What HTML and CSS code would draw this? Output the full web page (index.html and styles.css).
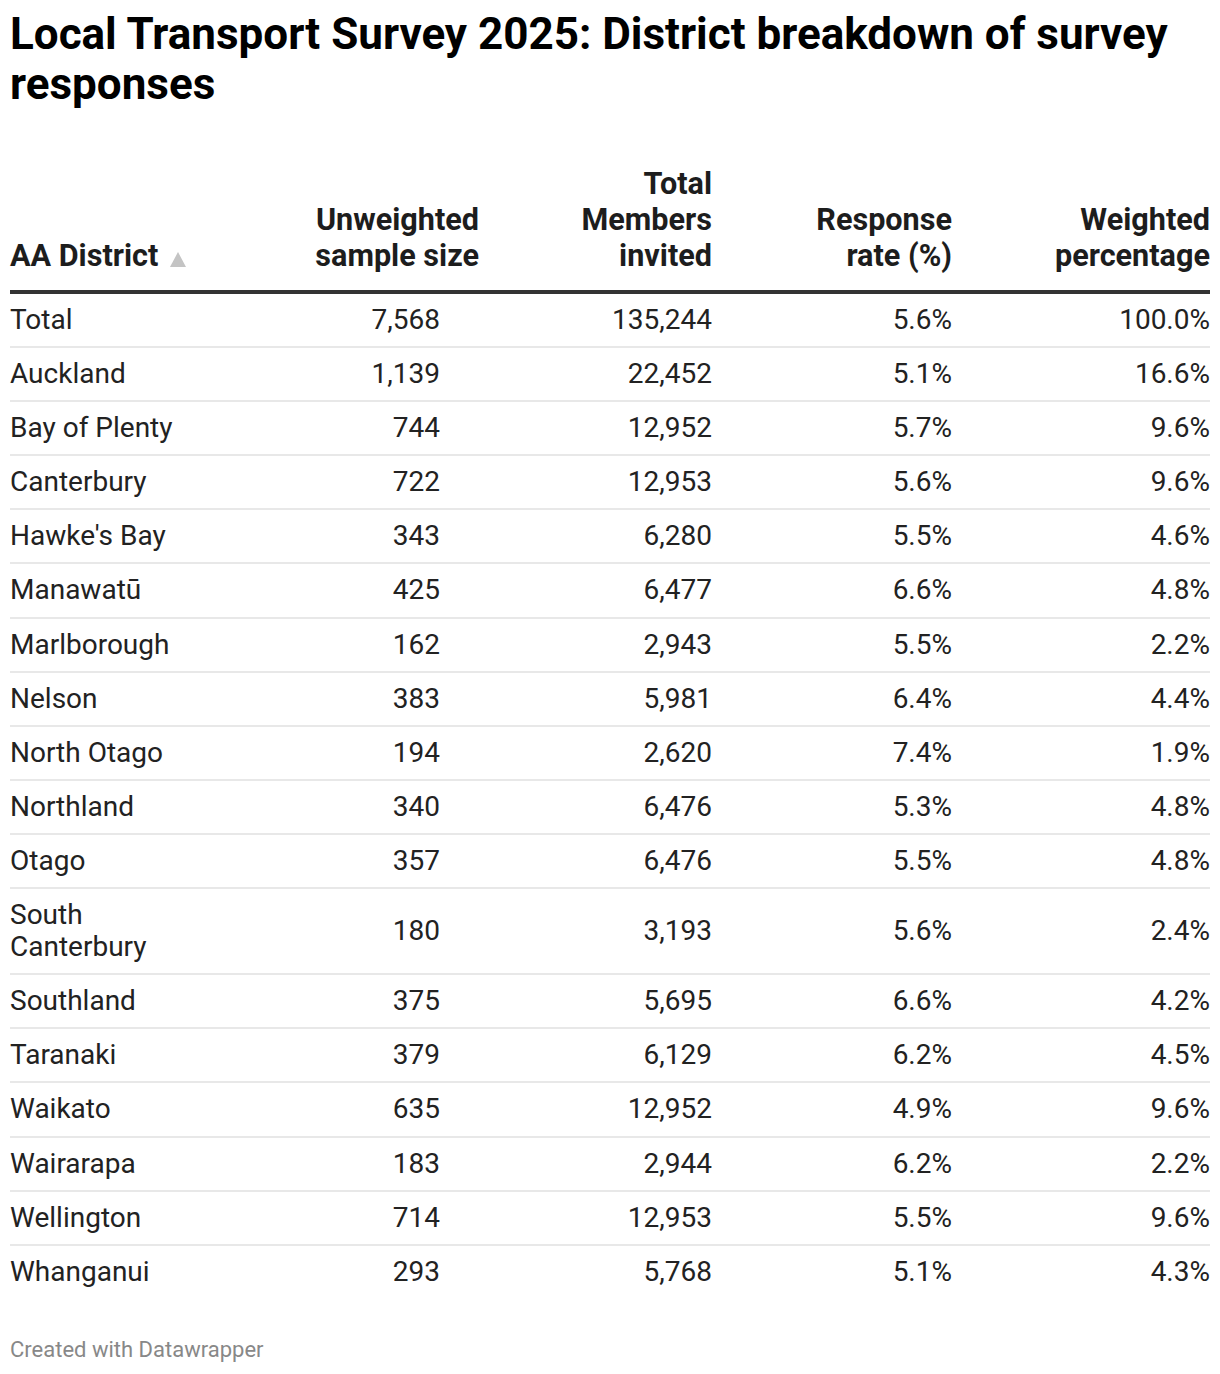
FILE: index.html
```html
<!DOCTYPE html>
<html lang="en">
<head>
<meta charset="utf-8">
<title>Local Transport Survey 2025</title>
<link rel="stylesheet" href="styles.css">
</head>
<body>
<div class="chart">
  <h1 class="title">Local Transport Survey 2025: District breakdown of survey responses</h1>
  <table class="data">
    <colgroup>
      <col class="c1"><col class="c2"><col class="c3"><col class="c4"><col class="c5">
    </colgroup>
    <thead>
      <tr>
        <th class="left">AA District <svg class="sort" width="16" height="15" viewBox="0 0 16 15"><polygon points="8,0 16,15 0,15" fill="#c4c4c4"/></svg></th>
        <th>Unweighted sample size</th>
        <th>Total Members invited</th>
        <th>Response rate (%)</th>
        <th>Weighted percentage</th>
      </tr>
    </thead>
    <tbody>
      <tr><td class="left">Total</td><td class="n2">7,568</td><td>135,244</td><td>5.6%</td><td>100.0%</td></tr>
      <tr><td class="left">Auckland</td><td class="n2">1,139</td><td>22,452</td><td>5.1%</td><td>16.6%</td></tr>
      <tr><td class="left">Bay of Plenty</td><td class="n2">744</td><td>12,952</td><td>5.7%</td><td>9.6%</td></tr>
      <tr><td class="left">Canterbury</td><td class="n2">722</td><td>12,953</td><td>5.6%</td><td>9.6%</td></tr>
      <tr><td class="left">Hawke's Bay</td><td class="n2">343</td><td>6,280</td><td>5.5%</td><td>4.6%</td></tr>
      <tr><td class="left">Manawatū</td><td class="n2">425</td><td>6,477</td><td>6.6%</td><td>4.8%</td></tr>
      <tr><td class="left">Marlborough</td><td class="n2">162</td><td>2,943</td><td>5.5%</td><td>2.2%</td></tr>
      <tr><td class="left">Nelson</td><td class="n2">383</td><td>5,981</td><td>6.4%</td><td>4.4%</td></tr>
      <tr><td class="left">North Otago</td><td class="n2">194</td><td>2,620</td><td>7.4%</td><td>1.9%</td></tr>
      <tr><td class="left">Northland</td><td class="n2">340</td><td>6,476</td><td>5.3%</td><td>4.8%</td></tr>
      <tr><td class="left">Otago</td><td class="n2">357</td><td>6,476</td><td>5.5%</td><td>4.8%</td></tr>
      <tr><td class="left">South Canterbury</td><td class="n2">180</td><td>3,193</td><td>5.6%</td><td>2.4%</td></tr>
      <tr><td class="left">Southland</td><td class="n2">375</td><td>5,695</td><td>6.6%</td><td>4.2%</td></tr>
      <tr><td class="left">Taranaki</td><td class="n2">379</td><td>6,129</td><td>6.2%</td><td>4.5%</td></tr>
      <tr><td class="left">Waikato</td><td class="n2">635</td><td>12,952</td><td>4.9%</td><td>9.6%</td></tr>
      <tr><td class="left">Wairarapa</td><td class="n2">183</td><td>2,944</td><td>6.2%</td><td>2.2%</td></tr>
      <tr><td class="left">Wellington</td><td class="n2">714</td><td>12,953</td><td>5.5%</td><td>9.6%</td></tr>
      <tr><td class="left">Whanganui</td><td class="n2">293</td><td>5,768</td><td>5.1%</td><td>4.3%</td></tr>
    </tbody>
  </table>
  <div class="footer">Created with Datawrapper</div>
</div>
</body>
</html>
```
FILE: styles.css
```css
* { box-sizing: border-box; }
html, body { margin: 0; padding: 0; background: #fff; }
body {
  font-family: Roboto, "Liberation Sans", sans-serif;
  color: #333;
}
.chart {
  padding: 9px 10px 0 10px;
}
.title {
  margin: 0;
  font-size: 44px;
  line-height: 50px;
  font-weight: 700;
  color: #000;
}
.data {
  margin-top: 41px;
  width: 1200px;
  table-layout: fixed;
  border-collapse: collapse;
}
.c1 { width: 230px; }
.c2 { width: 239px; }
.c3 { width: 233px; }
.c4 { width: 240px; }
.c5 { width: 258px; }
.data th {
  font-size: 30.6px;
  line-height: 36px;
  font-weight: 700;
  color: #1d1d1d;
  text-align: right;
  vertical-align: bottom;
  padding: 16px 0 16px 60px;
  border-bottom: 4px solid #333;
}
.data th.left { text-align: left; padding-left: 0; padding-right: 20px; }
.sort { margin-left: 4px; vertical-align: -1px; }
.data td {
  font-size: 28px;
  line-height: 32.1px;
  text-align: right;
  vertical-align: middle;
  padding: 10px 0 10px 20px;
  border-bottom: 2px solid #e8e8e8;
  color: #222;
}
.data td.left { text-align: left; padding-left: 0; padding-right: 20px; }
.data td.n2 { padding-right: 39px; }
.data tbody tr:last-child td { border-bottom: none; }
.footer {
  margin-top: 39px;
  font-size: 22px;
  line-height: 26px;
  color: #888;
}
```
